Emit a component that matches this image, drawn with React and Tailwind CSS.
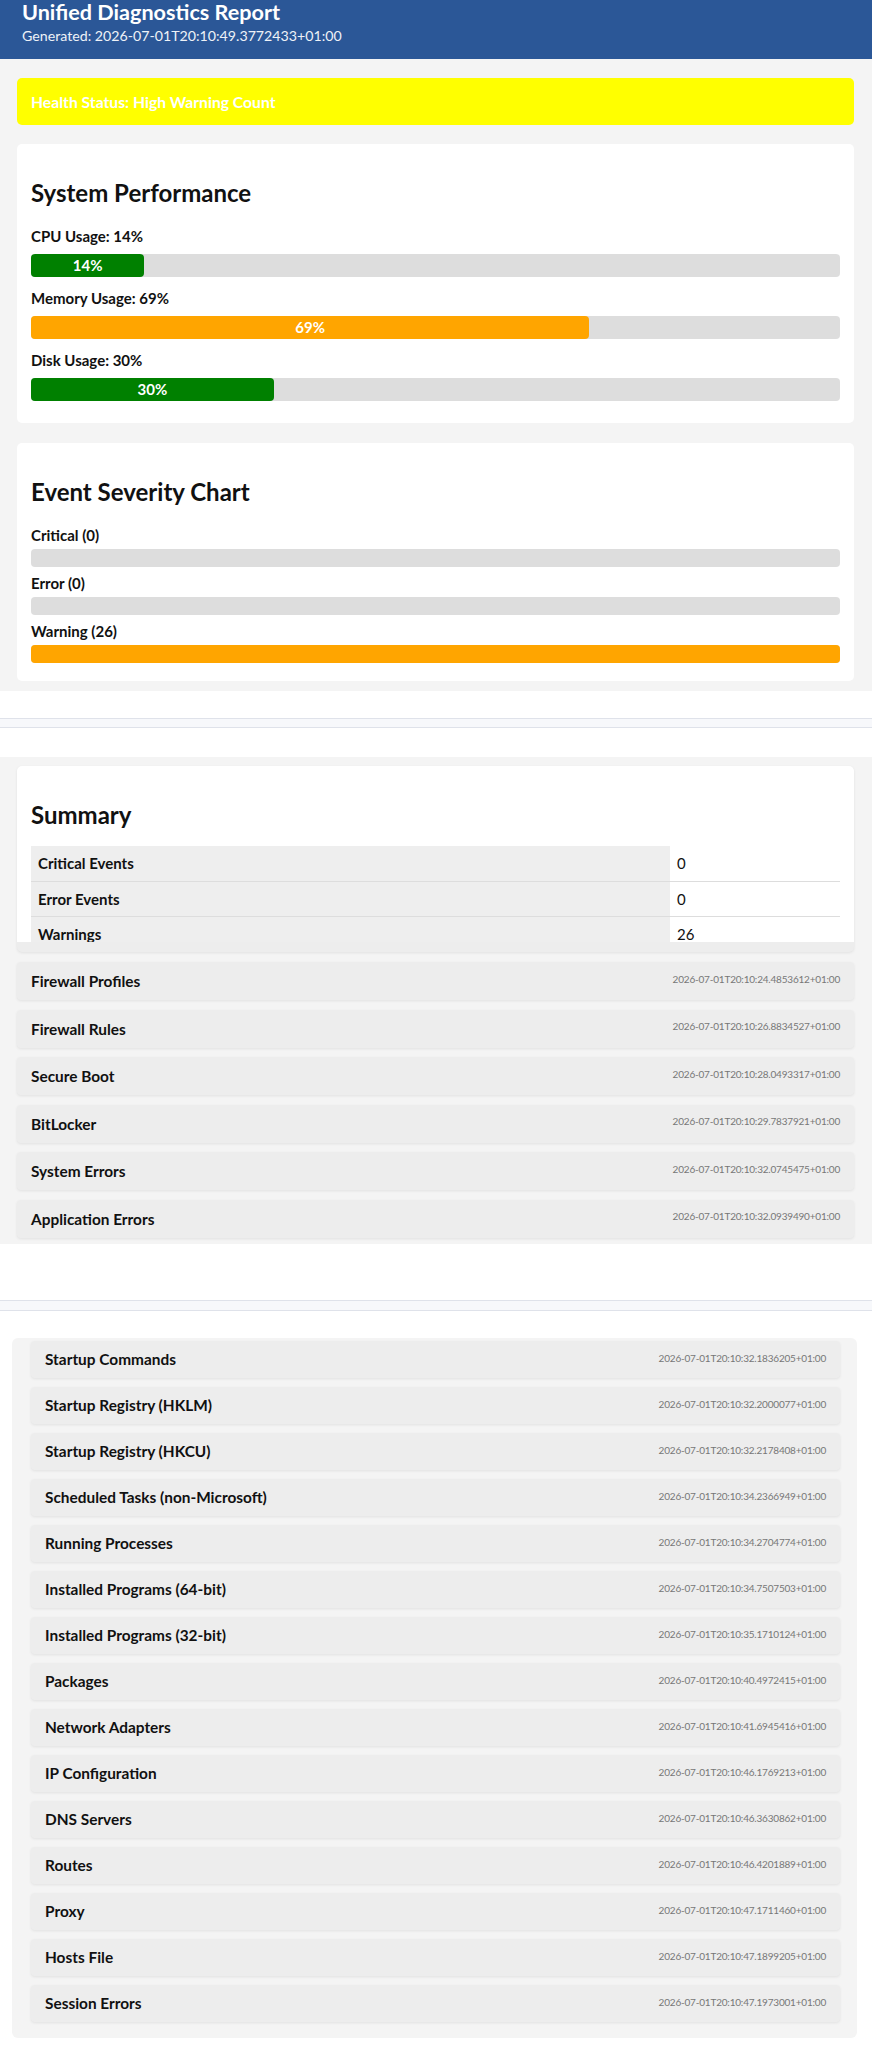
import React from "react";

const perf = [
  { label: "CPU Usage: 14%", pct: 14, color: "bg-[#008000]" },
  { label: "Memory Usage: 69%", pct: 69, color: "bg-[#ffa500]" },
  { label: "Disk Usage: 30%", pct: 30, color: "bg-[#008000]" },
];

const severity = [
  { label: "Critical (0)", pct: 0 },
  { label: "Error (0)", pct: 0 },
  { label: "Warning (26)", pct: 100 },
];

const section2 = [
  ["Firewall Profiles", "2026-07-01T20:10:24.4853612+01:00"],
  ["Firewall Rules", "2026-07-01T20:10:26.8834527+01:00"],
  ["Secure Boot", "2026-07-01T20:10:28.0493317+01:00"],
  ["BitLocker", "2026-07-01T20:10:29.7837921+01:00"],
  ["System Errors", "2026-07-01T20:10:32.0745475+01:00"],
  ["Application Errors", "2026-07-01T20:10:32.0939490+01:00"],
];

const section3 = [
  ["Startup Commands", "2026-07-01T20:10:32.1836205+01:00"],
  ["Startup Registry (HKLM)", "2026-07-01T20:10:32.2000077+01:00"],
  ["Startup Registry (HKCU)", "2026-07-01T20:10:32.2178408+01:00"],
  ["Scheduled Tasks (non-Microsoft)", "2026-07-01T20:10:34.2366949+01:00"],
  ["Running Processes", "2026-07-01T20:10:34.2704774+01:00"],
  ["Installed Programs (64-bit)", "2026-07-01T20:10:34.7507503+01:00"],
  ["Installed Programs (32-bit)", "2026-07-01T20:10:35.1710124+01:00"],
  ["Packages", "2026-07-01T20:10:40.4972415+01:00"],
  ["Network Adapters", "2026-07-01T20:10:41.6945416+01:00"],
  ["IP Configuration", "2026-07-01T20:10:46.1769213+01:00"],
  ["DNS Servers", "2026-07-01T20:10:46.3630862+01:00"],
  ["Routes", "2026-07-01T20:10:46.4201889+01:00"],
  ["Proxy", "2026-07-01T20:10:47.1711460+01:00"],
  ["Hosts File", "2026-07-01T20:10:47.1899205+01:00"],
  ["Session Errors", "2026-07-01T20:10:47.1973001+01:00"],
];

function Heading({ children, mb = "mb-[17px]" }) {
  return (
    <h2 className={`mt-[19px] ${mb} text-[24px] leading-[32px] font-bold text-[#111]`}>
      {children}
    </h2>
  );
}

function ItemCard({ title, ts, h, tsShift }) {
  return (
    <div
      className={`flex ${h} items-center justify-between rounded-[4px] bg-[#ededed] px-[14px] shadow-[0_1px_3px_rgba(0,0,0,0.08)]`}
    >
      <span className="text-[15.4px] leading-[20px] font-bold text-[#111]">{title}</span>
      <span className={`text-[10px] leading-[14px] tracking-[-0.2px] text-[#777] ${tsShift}`}>
        {ts}
      </span>
    </div>
  );
}

export default function App() {
  return (
    <div className="bg-white font-['Lato',sans-serif] text-[#111]">
      {/* Header */}
      <header className="h-[59px] bg-[#2b5797] pl-[22px] text-white">
        <h1 className="text-[21.6px] leading-[24px] font-bold">Unified Diagnostics Report</h1>
        <div className="mt-[2px] text-[14.2px] leading-[20px] text-[#eef2f8]">
          Generated: 2026-07-01T20:10:49.3772433+01:00
        </div>
      </header>

      {/* Section 1 */}
      <section className="bg-[#f4f4f4] pt-[19px] pb-[10px] pl-[17px] pr-[18px]">
        <div className="flex h-[47px] items-center rounded-[5px] bg-[#ffff00] px-[14px]">
          <span className="text-[15.7px] leading-[20px] font-bold text-white">
            Health Status: High Warning Count
          </span>
        </div>

        <div className="mt-[19px] rounded-[5px] bg-white px-[14px] pt-[14px] pb-[22px]">
          <Heading>System Performance</Heading>
          <div className="flex flex-col gap-[11px]">
            {perf.map((p) => (
              <div key={p.label}>
                <div className="text-[15px] leading-[20px] font-bold">{p.label}</div>
                <div className="mt-[8px] h-[23px] rounded-[4px] bg-[#dddddd]">
                  <div
                    className={`flex h-full items-center justify-center rounded-[4px] ${p.color} text-[15px] font-bold text-white`}
                    style={{ width: `${p.pct}%` }}
                  >
                    {p.pct}%
                  </div>
                </div>
              </div>
            ))}
          </div>
        </div>

        <div className="mt-[20px] rounded-[5px] bg-white px-[14px] pt-[14px] pb-[18px]">
          <Heading>Event Severity Chart</Heading>
          <div className="flex flex-col gap-[6px]">
            {severity.map((s) => (
              <div key={s.label}>
                <div className="text-[15px] leading-[20px] font-bold">{s.label}</div>
                <div className="mt-[4px] h-[18px] rounded-[4px] bg-[#dddddd]">
                  {s.pct > 0 && (
                    <div
                      className="h-full rounded-[4px] bg-[#ffa500]"
                      style={{ width: `${s.pct}%` }}
                    />
                  )}
                </div>
              </div>
            ))}
          </div>
        </div>
      </section>

      {/* Separator 1 */}
      <div className="bg-white pt-[27px] pb-[29px]">
        <div className="h-[10px] border-y border-[#dfe2ea] bg-[#f7f8fb]" />
      </div>

      {/* Section 2 */}
      <section className="bg-[#f4f4f4] pt-[9px] pb-[6px] pl-[17px] pr-[18px]">
        <div className="rounded-[5px] bg-[#ededed] pb-[10px] shadow-[0_1px_3px_rgba(0,0,0,0.08)]">
          <div className="h-[176px] overflow-hidden rounded-t-[5px] bg-white px-[14px] pt-[14px]">
            <Heading mb="mb-[15px]">Summary</Heading>
            <table className="w-full border-collapse text-[15px] leading-[20px]">
              <tbody>
                {[
                  ["Critical Events", "0"],
                  ["Error Events", "0"],
                  ["Warnings", "26"],
                ].map(([k, v]) => (
                  <tr key={k} className="h-[35px] border-b border-[#dddddd]">
                    <td className="w-[639px] bg-[#eeeeee] px-[7px] font-bold">{k}</td>
                    <td className="px-[7px]">{v}</td>
                  </tr>
                ))}
              </tbody>
            </table>
          </div>
        </div>

        <div className="mt-[10px] flex flex-col gap-[9.6px]">
          {section2.map(([t, ts]) => (
            <ItemCard key={t} title={t} ts={ts} h="h-[38px]" tsShift="mb-[5px]" />
          ))}
        </div>
      </section>

      {/* Separator 2 + Section 3 */}
      <div className="bg-white pt-[56px] pb-[11px]">
        <div className="h-[11px] border-y border-[#dfe2ea] bg-[#f7f8fb]" />
        <div className="mt-[27px] ml-[12px] mr-[15px] flex flex-col gap-[9px] rounded-[6px] bg-[#f4f4f4] pt-[3px] pb-[16px] pl-[19px] pr-[17px]">
          {section3.map(([t, ts]) => (
            <ItemCard key={t} title={t} ts={ts} h="h-[37px]" tsShift="mb-[2px]" />
          ))}
        </div>
      </div>
    </div>
  );
}
